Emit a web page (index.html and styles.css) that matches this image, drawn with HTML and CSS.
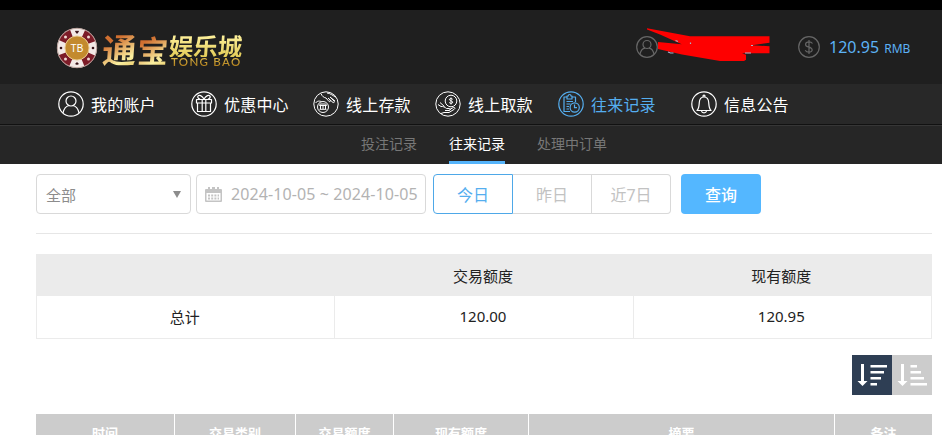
FILE: index.html
```html
<!DOCTYPE html>
<html lang="zh-CN">
<head>
    <meta charset="UTF-8">
    <meta name="viewport" content="width=device-width, initial-scale=1.0">
    <title>往来记录</title>
    <link rel="stylesheet" href="styles.css">
</head>
<body>
    <header class="header">
        <div class="logo">
            <svg class="logo-chip" viewBox="0 0 42 42">
                <circle cx="21" cy="21" r="20" fill="#f3e9e6"/>
                <circle cx="21" cy="21" r="16" fill="none" stroke="#7d1c28" stroke-width="8" stroke-dasharray="12.566 12.566" stroke-dashoffset="-6.283"/>
                <circle cx="21" cy="21" r="19.7" fill="none" stroke="#b9a29c" stroke-width="1"/>
                <circle cx="21" cy="21" r="12" fill="#c38a2e" stroke="#e8c98c" stroke-width="1"/>
                <g fill="#3a1418">
                    <path d="M21 7l-2-2.5 1-1 1 .8 1-.8 1 1z"/>
                    <path d="M21 35l-2 2 1.500.8h1l1.500-.8z"/>
                    <circle cx="5" cy="21" r="1.300"/>
                    <circle cx="37" cy="21" r="1.300"/>
                </g>
                <g fill="#f0d9d4">
                    <circle cx="9.500" cy="10" r="1.500"/>
                    <circle cx="32.500" cy="10" r="1.500"/>
                    <circle cx="9.500" cy="32" r="1.500"/>
                    <circle cx="32.500" cy="32" r="1.500"/>
                </g>
                <text class="chip-text" x="21" y="24.500">TB</text>
            </svg>
            <span class="logo-big">通</span>
            <span class="logo-big logo-second">宝</span>
            <div class="logo-side">
                <span class="logo-small">娱乐城</span>
                <span class="logo-en">TONG BAO</span>
            </div>
        </div>
        <div class="account">
            <svg class="account-icon" viewBox="0 0 22 22">
                <circle cx="11" cy="11" r="10.300"/>
                <circle cx="11" cy="8.500" r="4"/>
                <path d="M4 18c1-4 3-5.500 5-5.800M18 18c-1-4-3-5.500-5-5.800"/>
            </svg>
            <svg class="scribble" viewBox="0 0 124 36">
                <path d="M1 .3L44 8.300H123.500V14.700L106 17.300 123.500 18.300V25.300H96L100 26.700V31.700L98 33H74L36 26.500 12 21V14L35.700 16.300 14 6.500 1 1.500z"/>
                <path class="scribble-name" d="M29.500 12.500l2.500 1M22 24l2.500 1h3M44.500 14.500v1.500M105 17.500h2M99 25h6"/>
            </svg>
        </div>
        <div class="balance">
            <svg class="account-icon" viewBox="0 0 22 22">
                <circle cx="11" cy="11" r="10.300"/>
                <path d="M14.500 7.500c-1-1.400-2.200-1.700-3.500-1.700-4.200 0-4.600 4.200-.8 5.100 5.500 1.200 4.800 5.300.8 5.300-1.700 0-3-.6-3.800-2M11 4v14"/>
            </svg>
            <span class="amount">120.95 <small>RMB</small></span>
        </div>
    </header>

    <nav class="nav">
        <a class="nav-item">
            <svg class="nav-icon" viewBox="0 0 26 26">
                <circle cx="13" cy="13" r="12.200"/>
                <circle cx="13" cy="10" r="5"/>
                <path d="M5 22c1-5 3.500-7 6-7.500M21 22c-1-5-3.500-7-6-7.500"/>
            </svg>我的账户</a>
        <a class="nav-item">
            <svg class="nav-icon" viewBox="0 0 26 26">
                <circle cx="13" cy="13" r="12.200"/>
                <path d="M5.500 8.500h15v3.500h-15zM6.500 12v8.500h13V12M11.200 8.500v12M14.800 8.500v12M13 8C11 4.500 8 3.500 7 5s.5 2.500 2 3.500M13 8c2-3.500 5-4.500 6-3s-.5 2.500-2 3.500"/>
            </svg>优惠中心</a>
        <a class="nav-item">
            <svg class="nav-icon thin" viewBox="0 0 26 26">
                <circle cx="13" cy="13" r="12.200"/>
                <circle cx="10" cy="16" r="5.500"/>
                <path d="M6.500 14.500l.7-1.500h5.600l.7 1.500zM7.500 14.500v3.500M10 14.500v3.500M12.500 14.500v3.500M6.500 18.300h7M8 2.500c1 3 3 4 5 4.500l3 3.500c1 .5 2-.3 1-1.500l-2-2 5 4.500c1 .4 2-.5 1-1.500l-4-4 5 4M14 2c3 0 6 3 9 4M2.500 12c2-2.500 4-2 6-1.500"/>
            </svg>线上存款</a>
        <a class="nav-item">
            <svg class="nav-icon thin" viewBox="0 0 26 26">
                <circle cx="13" cy="13" r="12.200"/>
                <circle cx="16" cy="10" r="5.800"/>
                <path d="M17.700 8.300c-1.500-1.300-3.700-.8-3.200.6.400 1.200 3 .8 3.200 2.200.1 1.500-2.400 1.800-3.500.4M16 6.500v7M3 13.500l3 2c2-.3 4 .7 5.500 2h3c1.500.4 1 2-.5 2h-4M14.500 18.500l4-2c1.500-.4 2 1 .7 1.800L14 21.500H9l-3 1M5 11.500l4.500 4"/>
            </svg>线上取款</a>
        <a class="nav-item active">
            <svg class="nav-icon" viewBox="0 0 26 26">
                <circle cx="13" cy="13" r="12.200"/>
                <path d="M12 20.500H6V6h3M14 6h3.500v5M9 5h1.200c0-2 2.800-2 2.800 0H14v3H9zM8.500 10.500H15M8.500 13h4M8.500 15.500H11M8.500 18H11M16.500 13.500v3.200H19"/>
                <circle cx="16.700" cy="16.500" r="4.600"/>
            </svg>往来记录</a>
        <a class="nav-item">
            <svg class="nav-icon" viewBox="0 0 26 26">
                <circle cx="13" cy="13" r="12.200"/>
                <path d="M6 19.500h14c-2-2-2-4-2.300-8C17.500 8 15.500 6 13 6s-4.500 2-4.700 5.500C8 15.500 8 17.500 6 19.500zM12 6c-.5-2.500 2.500-2.500 2 0M10.500 20c.5 2.500 4.500 2.500 5 0"/>
            </svg>信息公告</a>
    </nav>

    <div class="subnav">
        <a class="subnav-item">投注记录</a>
        <a class="subnav-item current">往来记录</a>
        <a class="subnav-item">处理中订单</a>
    </div>

    <main class="content">
        <div class="filters">
            <div class="select">全部<span class="arrow"></span></div>
            <div class="date-range">
                <svg class="calendar" viewBox="0 0 17 17">
                    <path fill="#c4c4c4" fill-rule="evenodd" d="M1 3h2V1h2v2h2V1h3v2h2V1h2v2h2q1 0 1 1v11q0 1-1 1H1q-1 0-1-1V4q0-1 1-1zM1.500 7v7.500h14V7z"/>
                    <path stroke="#c4c4c4" stroke-width="2" stroke-dasharray="2 1.200" d="M3 9.500h11M3 12.500h11"/>
                </svg>
                <span>2024-10-05 ~ 2024-10-05</span>
            </div>
            <div class="day-group">
                <button class="day selected">今日</button>
                <button class="day">昨日</button>
                <button class="day">近7日</button>
            </div>
            <button class="search">查询</button>
        </div>

        <table class="summary">
            <tr><th></th><th>交易额度</th><th>现有额度</th></tr>
            <tr><td>总计</td><td>120.00</td><td>120.95</td></tr>
        </table>

        <div class="sort">
            <button class="sort-btn sort-on">
                <svg viewBox="0 0 40 40">
                    <path d="M9 9h3v17h3.500l-5 5-5-5H9zM18.500 10H35v2.500H18.500zM18.500 16H32v2.500H18.500zM18.500 22H29v2.500H18.500zM18.500 28H25v2.500h-6.500z"/>
                </svg>
            </button>
            <button class="sort-btn">
                <svg viewBox="0 0 40 40">
                    <path d="M9 9h3v17h3.500l-5 5-5-5H9zM18.500 10H25v2.500h-6.500zM18.500 16H29v2.500H18.500zM18.500 22H32v2.500H18.500zM18.500 28H35v2.500H18.500z"/>
                </svg>
            </button>
        </div>

        <div class="records">
            <span>时间</span>
            <span>交易类别</span>
            <span>交易额度</span>
            <span>现有额度</span>
            <span>摘要</span>
            <span>备注</span>
        </div>
    </main>
</body>
</html>
```

FILE: styles.css
```css
* {
    box-sizing: border-box;
}

body {
    margin: 0;
    height: 435px;
    overflow: hidden;
    background-color: #fff;
    font-family: "Noto Sans", "Noto Sans CJK SC", sans-serif;
    font-size: 16px;
}

button {
    padding: 0;
    border: none;
    font: inherit;
}

/* Header */
.header {
    display: flex;
    height: 84px;
    border-top: 10px solid #000;
    background-color: #1f1f1f;
    padding-left: 56px;
}

.logo {
    display: flex;
    width: 580px;
    padding-top: 17px;
}

.logo-chip {
    width: 42px;
    height: 42px;
    flex: none;
}

.chip-text {
    font-family: "Liberation Sans", sans-serif;
    font-size: 10px;
    fill: #fff;
    text-anchor: middle;
}

.logo-big,
.logo-small,
.logo-en {
    background: linear-gradient(150deg, #d06f30 25%, #fbf0a0 60%, #d9a63a 90%);
    -webkit-background-clip: text;
    background-clip: text;
    color: transparent;
}

.logo-big {
    width: 35px;
    margin-left: 4px;
    font-family: "Noto Sans CJK SC", sans-serif;
    font-size: 34px;
    font-weight: 700;
    line-height: 44px;
    transform: skewX(-4deg);
}

.logo-second {
    margin-left: 0;
    width: 32px;
    font-size: 31px;
    line-height: 46px;
}

.logo-side {
    display: flex;
    flex-direction: column;
    padding-top: 7px;
}

.logo-small {
    font-family: "Noto Sans CJK SC", sans-serif;
    font-size: 24.500px;
    font-weight: 700;
    line-height: 23px;
    background-image: linear-gradient(#fff3a0, #e3cc58);
    transform: skewX(-4deg);
}

.logo-en {
    padding-left: 2px;
    font-family: "Lato", sans-serif;
    font-size: 11.500px;
    font-weight: 600;
    line-height: 10px;
    letter-spacing: 1.300px;
    white-space: nowrap;
    background-image: linear-gradient(#e5c04f, #a97716);
}

.account {
    display: flex;
    width: 162px;
    padding-top: 26px;
}

.account-icon {
    width: 22px;
    height: 22px;
    flex: none;
    fill: none;
    stroke: #666;
    stroke-width: 1.200;
}

.scribble {
    width: 124px;
    height: 36px;
    flex: none;
    margin: -8px 0 0 -12px;
    fill: #fe0000;
}

.scribble-name {
    fill: none;
    stroke: #a5b4cc;
    stroke-width: 1.200;
}

.balance {
    display: flex;
    padding-top: 26px;
}

.amount {
    margin-left: 9px;
    color: #5cb2f5;
    line-height: 22px;
    white-space: nowrap;
}

.amount small {
    margin-left: 1px;
    font-size: 12px;
}

/* Main menu */
.nav {
    display: grid;
    grid-template-columns: 133px 122px 122px 123px 133px 120px;
    height: 41px;
    padding-left: 58px;
    background-color: #282828;
    border-bottom: 1px solid #111;
}

.nav-item {
    display: flex;
    align-items: center;
    gap: 7px;
    color: #fff;
    letter-spacing: 0.200px;
    white-space: nowrap;
}

.nav-icon {
    width: 26px;
    height: 26px;
    fill: none;
    stroke: currentColor;
    stroke-width: 1.200;
    stroke-linejoin: round;
}

.thin {
    stroke-width: 1;
}

.active {
    color: #55aeef;
}

/* Second level menu */
.subnav {
    display: flex;
    gap: 32px;
    height: 39px;
    padding-left: 361px;
    background-color: #262626;
    border-top: 1px solid #363636;
    font-size: 14px;
}

.subnav-item {
    line-height: 36px;
    color: #777;
    white-space: nowrap;
}

.current {
    color: #fff;
    border-bottom: 3px solid #55b4fb;
}

/* Search bar */
.content {
    padding: 10px 10px 0 36px;
}

.filters {
    display: flex;
    height: 60px;
    border-bottom: 1px solid #e6e6e6;
}

.select,
.date-range {
    display: flex;
    align-items: center;
    height: 40px;
    border: 1px solid #d9d9d9;
    border-radius: 4px;
}

.select {
    justify-content: space-between;
    width: 155px;
    margin-right: 5px;
    padding: 0 9px;
    color: #8c8c8c;
    font-size: 15px;
}

.arrow {
    border: 4px solid transparent;
    border-top: 7px solid #8c8c8c;
    border-bottom: none;
}

.date-range {
    width: 230px;
    margin-right: 7px;
    padding-left: 8px;
    gap: 9px;
    color: #b3b3b3;
    letter-spacing: 0.100px;
    white-space: nowrap;
}

.calendar {
    width: 17px;
    height: 17px;
}

.day-group {
    display: flex;
    height: 40px;
    margin-right: 10px;
}

.day {
    width: 79px;
    background-color: #fff;
    border: 1px solid #d9d9d9;
    border-left: none;
    color: #c2c2c2;
}

.day:last-child {
    border-radius: 0 4px 4px 0;
}

.selected {
    width: 80px;
    border: 1px solid #4ea8e8;
    border-radius: 4px 0 0 4px;
    color: #55aeef;
}

.search {
    width: 80px;
    height: 40px;
    border-radius: 4px;
    background-color: #54b7ff;
    color: #fff;
    font-weight: 500;
}

/* Totals */
.summary {
    width: 896px;
    margin-top: 20px;
    border-collapse: collapse;
    table-layout: fixed;
    font-size: 15px;
    text-align: center;
    color: #222;
}

.summary th,
.summary td {
    height: 43px;
    padding: 0 2px 2px 0;
    border: 1px solid #ebebeb;
    font-weight: normal;
}

.summary th {
    height: 41px;
    padding-bottom: 0;
    background-color: #ebebeb;
}

/* Sort buttons */
.sort {
    display: flex;
    justify-content: flex-end;
    margin-top: 16px;
}

.sort-btn {
    width: 40px;
    height: 40px;
    background-color: #ccc;
}

.sort-btn svg {
    display: block;
    fill: #fff;
}

.sort-on {
    background-color: #2e3e54;
}

/* Record list */
.records {
    display: grid;
    grid-template-columns: 138px 120px 97px 134px 305px 97px;
    gap: 1px;
    margin-top: 19px;
}

.records span {
    height: 40px;
    background-color: #ccc;
    color: #fff;
    font-size: 13px;
    font-weight: bold;
    line-height: 39px;
    text-align: center;
}
```
